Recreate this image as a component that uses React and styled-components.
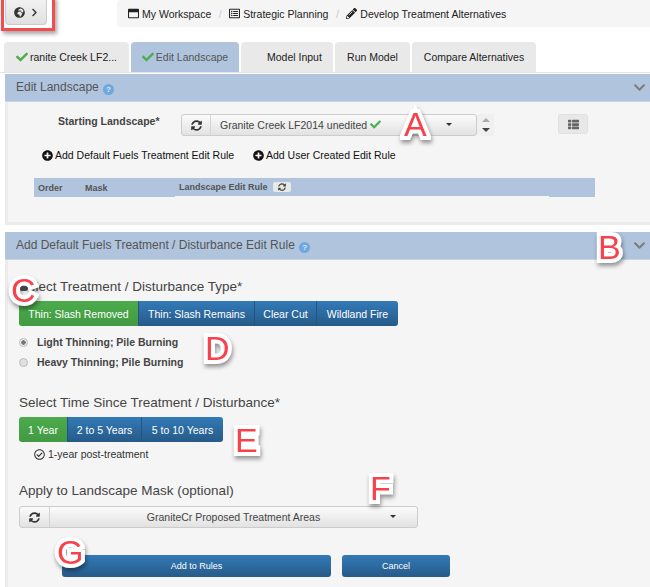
import React from "react";
import styled, { createGlobalStyle } from "styled-components";
import {
  FaGlobeAfrica,
  FaChevronRight,
  FaChevronDown,
  FaRegWindowMaximize,
  FaRegListAlt,
  FaPencilAlt,
  FaCheck,
  FaSyncAlt,
  FaPlusCircle,
  FaThList,
  FaRegCheckCircle,
} from "react-icons/fa";

const GlobalStyle = createGlobalStyle`
  html, body { margin: 0; padding: 0; background: #fff; }
  * { box-sizing: border-box; }
`;

const App = () => {
  return (
    <Page>
      <GlobalStyle />
      <TopBar>
        <MenuButton>
          <FaGlobeAfrica size={11} />
          <FaChevronRight size={9} />
        </MenuButton>
        <Breadcrumb>
          <Crumb><FaRegWindowMaximize size={11} />My Workspace</Crumb>
          <Slash>/</Slash>
          <Crumb><FaRegListAlt size={11} />Strategic Planning</Crumb>
          <Slash>/</Slash>
          <Crumb><FaPencilAlt size={11} />Develop Treatment Alternatives</Crumb>
        </Breadcrumb>
      </TopBar>

      <Tabs>
        <Tab $width={125}><GreenCheck size={12} />ranite Creek LF2...</Tab>
        <Tab $width={108} $active><GreenCheck size={12} />Edit Landscape</Tab>
        <Tab $width={92} $pad={26}>Model Input</Tab>
        <Tab $width={75}>Run Model</Tab>
        <Tab $width={124}>Compare Alternatives</Tab>
      </Tabs>

      <PanelHeader>
        <HeaderTitle>Edit Landscape <Help>?</Help></HeaderTitle>
        <Collapse size={13} />
      </PanelHeader>
      <LandscapeBody>
        <StartRow>
          <StartLabel>Starting Landscape*</StartLabel>
          <SelectGroup $width={296}>
            <RefreshAddon $width={29}><FaSyncAlt size={11} /></RefreshAddon>
            <SelectMain $align="left">
              <span>Granite Creek LF2014 unedited <GreenCheck size={11} /></span>
              <Caret $right={24} />
            </SelectMain>
          </SelectGroup>
          <Spinner>
            <Arrow $up />
            <Arrow />
          </Spinner>
          <ListButton><FaThList size={11} /></ListButton>
        </StartRow>
        <AddRow>
          <AddLink $width={211}><FaPlusCircle size={11} />Add Default Fuels Treatment Edit Rule</AddLink>
          <AddLink><FaPlusCircle size={11} />Add User Created Edit Rule</AddLink>
        </AddRow>
        <RuleTable>
          <RuleCell $width={141}>
            <RuleHead $width={47}>Order</RuleHead>
            <RuleHead>Mask</RuleHead>
          </RuleCell>
          <RuleCell $width={374} $short>
            <RuleHead $width={94}>Landscape Edit Rule</RuleHead>
            <MiniRefresh><FaSyncAlt size={8} /></MiniRefresh>
          </RuleCell>
          <RuleCell $width={46} />
        </RuleTable>
      </LandscapeBody>

      <Gap />

      <PanelHeader>
        <HeaderTitle>Add Default Fuels Treatment / Disturbance Edit Rule <Help>?</Help></HeaderTitle>
        <Collapse size={13} />
      </PanelHeader>
      <RuleBody>
        <SectionTitle>Select Treatment / Disturbance Type*</SectionTitle>
        <Segments>
          <Segment $width={120} $active>Thin: Slash Removed</Segment>
          <Segment $width={116}>Thin: Slash Remains</Segment>
          <Segment $width={62}>Clear Cut</Segment>
          <Segment $width={81}>Wildland Fire</Segment>
        </Segments>
        <RadioGroup>
          <RadioRow>
            <Radio $checked />
            <RadioLabel>Light Thinning; Pile Burning</RadioLabel>
          </RadioRow>
          <RadioRow>
            <Radio />
            <RadioLabel>Heavy Thinning; Pile Burning</RadioLabel>
          </RadioRow>
        </RadioGroup>

        <SectionTitle $top={23}>Select Time Since Treatment / Disturbance*</SectionTitle>
        <Segments>
          <Segment $width={49} $active>1 Year</Segment>
          <Segment $width={74}>2 to 5 Years</Segment>
          <Segment $width={81}>5 to 10 Years</Segment>
        </Segments>
        <Note><FaRegCheckCircle size={11} />1-year post-treatment</Note>

        <SectionTitle $top={17} $bottom={7}>Apply to Landscape Mask (optional)</SectionTitle>
        <SelectGroup $width={399}>
          <RefreshAddon $width={30}><FaSyncAlt size={11} /></RefreshAddon>
          <SelectMain>
            GraniteCr Proposed Treatment Areas
            <Caret $right={21} />
          </SelectMain>
        </SelectGroup>
        <Actions>
          <ActionButton $width={269}>Add to Rules</ActionButton>
          <ActionButton $width={108}>Cancel</ActionButton>
        </Actions>
      </RuleBody>

      <Highlight />
      <Marker $x={404} $y={102}>A</Marker>
      <Marker $x={598} $y={225}>B</Marker>
      <Marker $x={11} $y={268}>C</Marker>
      <HiddenIcon />
      <Marker $x={205} $y={326}>D</Marker>
      <Marker $x={235} $y={418}>E</Marker>
      <Marker $x={370} $y={466}>F</Marker>
      <Marker $x={57} $y={530}>G</Marker>
    </Page>
  );
};

export default App;

const Page = styled.div`
  position: relative;
  width: 650px;
  height: 587px;
  overflow: hidden;
  background: #fff;
  color: #222;
  font-family: "Liberation Sans", Arial, sans-serif;
  font-size: 10.5px;
`;

const TopBar = styled.div`
  display: flex;
  height: 42px;
  padding-left: 5px;
`;

const MenuButton = styled.div`
  display: flex;
  align-items: center;
  justify-content: center;
  gap: 5px;
  width: 42px;
  height: 25px;
  background: linear-gradient(#f2f2f2, #e0e0e0);
  border: 1px solid #ccc;
  border-top: 0;
  border-radius: 0 0 4px 4px;
  color: #333;
`;

const Breadcrumb = styled.div`
  display: flex;
  align-items: center;
  gap: 6px;
  margin-left: 70px;
  flex: 1;
  height: 27px;
  padding-left: 11px;
  background: #f5f5f5;
  border-radius: 4px 0 0 4px;
`;

const Crumb = styled.span`
  display: flex;
  align-items: center;
  gap: 3px;
  font-size: 10.5px;
  color: #222;
  white-space: nowrap;
`;

const Slash = styled.span`
  margin: 0 1.5px;
  color: #ccc;
`;

const Tabs = styled.div`
  display: flex;
  gap: 2px;
  height: 31px;
  padding-left: 4px;
  border-bottom: 1px solid #e4e4e4;
`;

const Tab = styled.div`
  display: flex;
  align-items: center;
  justify-content: ${(p) => (p.$pad ? "flex-start" : "center")};
  gap: 2px;
  width: ${(p) => p.$width}px;
  height: 30px;
  padding-left: ${(p) => p.$pad || 0}px;
  background: ${(p) => (p.$active ? "#b0c4de" : "#e9e9e9")};
  border-radius: 4px 4px 0 0;
  color: ${(p) => (p.$active ? "#555" : "#222")};
  font-size: 10.5px;
  white-space: nowrap;
`;

const GreenCheck = styled(FaCheck)`
  color: #4cae4c;
  vertical-align: -1px;
`;

const PanelHeader = styled.div`
  display: flex;
  align-items: center;
  justify-content: space-between;
  height: 28px;
  margin: 1px 0 0 5px;
  padding: 0 4px 0 11px;
  background: #b0c4de;
  border-bottom: 1px solid #c8d4e4;
`;

const HeaderTitle = styled.div`
  font-size: 12px;
  color: #555;
`;

const Help = styled.span`
  display: inline-block;
  width: 11px;
  height: 11px;
  margin-left: 1px;
  border-radius: 50%;
  background: #6fa8e0;
  color: #dfeaf6;
  font-size: 8px;
  font-weight: bold;
  line-height: 11px;
  text-align: center;
  vertical-align: -1px;
`;

const Collapse = styled(FaChevronDown)`
  color: #7d7d7d;
`;

const LandscapeBody = styled.div`
  height: 123px;
  margin-left: 5px;
  padding-top: 12px;
  background: #f5f5f5;
  border-left: 3px solid #ececec;
  border-bottom: 3px solid #ececec;
`;

const StartRow = styled.div`
  display: flex;
  align-items: flex-start;
  padding-left: 50px;
`;

const StartLabel = styled.div`
  width: 123px;
  padding-top: 1px;
  font-size: 10.5px;
  font-weight: bold;
  color: #444;
`;

const SelectGroup = styled.div`
  display: flex;
  width: ${(p) => p.$width}px;
  height: 22px;
  border: 1px solid #ccc;
  border-radius: 3px;
  background: linear-gradient(#fbfbfb, #e2e2e2);
`;

const RefreshAddon = styled.div`
  display: flex;
  align-items: center;
  justify-content: center;
  width: ${(p) => p.$width}px;
  border-right: 1px solid #d4d4d4;
  color: #333;
`;

const SelectMain = styled.div`
  position: relative;
  display: flex;
  align-items: center;
  justify-content: ${(p) => (p.$align === "left" ? "flex-start" : "center")};
  flex: 1;
  padding-left: ${(p) => (p.$align === "left" ? "9px" : "0")};
  font-size: 10.5px;
  color: #444;
`;

const Caret = styled.i`
  position: absolute;
  top: 8px;
  right: ${(p) => p.$right}px;
  width: 0;
  height: 0;
  border-left: 3px solid transparent;
  border-right: 3px solid transparent;
  border-top: 3px solid #333;
`;

const Spinner = styled.div`
  display: flex;
  flex-direction: column;
  align-items: center;
  justify-content: center;
  gap: 6px;
  width: 17px;
  height: 22px;
  background: #f0f0f0;
`;

const Arrow = styled.i`
  width: 0;
  height: 0;
  border-left: 4px solid transparent;
  border-right: 4px solid transparent;
  ${(p) =>
    p.$up ? "border-bottom: 4px solid #aaa;" : "border-top: 4px solid #444;"}
`;

const ListButton = styled.div`
  display: flex;
  align-items: center;
  justify-content: center;
  width: 30px;
  height: 20px;
  margin-left: 64px;
  background: #e8e8e8;
  border: 1px solid #e0e0e0;
  border-radius: 3px;
  color: #666;
`;

const AddRow = styled.div`
  display: flex;
  align-items: center;
  height: 14px;
  margin-top: 12px;
  padding-left: 34px;
`;

const AddLink = styled.div`
  display: flex;
  align-items: center;
  gap: 2px;
  ${(p) => p.$width && `width: ${p.$width}px;`}
  font-size: 10.5px;
  color: #111;
  white-space: nowrap;
`;

const RuleTable = styled.div`
  display: flex;
  align-items: flex-start;
  margin: 16px 0 0 26px;
`;

const RuleCell = styled.div`
  display: flex;
  align-items: center;
  width: ${(p) => p.$width}px;
  height: ${(p) => (p.$short ? 18 : 19)}px;
  padding-left: 4px;
  background: #b0c4de;
`;

const RuleHead = styled.div`
  ${(p) => p.$width && `width: ${p.$width}px;`}
  font-size: 9px;
  font-weight: bold;
  color: #555;
  white-space: nowrap;
`;

const MiniRefresh = styled.div`
  display: flex;
  align-items: center;
  justify-content: center;
  width: 18px;
  height: 10px;
  background: #e8e8e8;
  border-radius: 2px;
  color: #444;
`;

const Gap = styled.div`
  height: 6px;
`;

const RuleBody = styled.div`
  height: 330px;
  margin-left: 5px;
  padding: 19px 0 0 11px;
  background: #f5f5f5;
  border-left: 3px solid #ececec;
`;

const SectionTitle = styled.div`
  height: 16px;
  margin: ${(p) => p.$top || 0}px 0 ${(p) => p.$bottom || 6}px;
  font-size: 13.5px;
  line-height: 16px;
  color: #444;
  white-space: nowrap;
`;

const Segments = styled.div`
  display: flex;
`;

const Segment = styled.div`
  display: flex;
  align-items: center;
  justify-content: center;
  width: ${(p) => p.$width}px;
  height: 25px;
  background: ${(p) =>
    p.$active
      ? "linear-gradient(#4cab4c, #429a42)"
      : "linear-gradient(#337ab7, #265a88)"};
  border-right: 1px solid #245580;
  color: #fff;
  font-size: 10.5px;
  white-space: nowrap;

  &:first-child {
    border-radius: 3px 0 0 3px;
  }

  &:last-child {
    border-radius: 0 3px 3px 0;
    border-right: 0;
  }
`;

const RadioGroup = styled.div`
  margin-top: 6px;
`;

const RadioRow = styled.div`
  display: flex;
  align-items: center;
  height: 20px;
`;

const Radio = styled.span`
  width: 9px;
  height: 9px;
  margin-right: 9px;
  border: 1px solid #bbb;
  border-radius: 50%;
  background: ${(p) =>
    p.$checked
      ? "radial-gradient(circle, #777 0 2px, #eee 2.5px)"
      : "#e0e0e0"};
`;

const RadioLabel = styled.span`
  font-size: 10.5px;
  font-weight: bold;
  color: #444;
`;

const Note = styled.div`
  display: flex;
  align-items: center;
  gap: 3px;
  height: 24px;
  padding-left: 15px;
  font-size: 10.5px;
  color: #333;
`;

const Actions = styled.div`
  display: flex;
  gap: 11px;
  margin: 27px 0 0 43px;
`;

const ActionButton = styled.div`
  display: flex;
  align-items: center;
  justify-content: center;
  width: ${(p) => p.$width}px;
  height: 22px;
  background: linear-gradient(#337ab7, #265a88);
  border-radius: 3px;
  color: #fff;
  font-size: 9px;
`;

const Highlight = styled.div`
  position: absolute;
  top: -4px;
  left: 1px;
  width: 54px;
  height: 35px;
  border: 3px solid #f44b4f;
  box-shadow: 2px 3px 4px rgba(0, 0, 0, 0.35);
`;

const HiddenIcon = styled.i`
  position: absolute;
  top: 286px;
  left: 20px;
  width: 8px;
  height: 5px;
  border-radius: 50%;
  background: #444;
`;

const Marker = styled.span`
  position: absolute;
  top: ${(p) => p.$y}px;
  left: ${(p) => p.$x}px;
  font-size: 34px;
  line-height: 44px;
  font-weight: normal;
  color: #f8414a;
  -webkit-text-stroke: 8px #fff;
  paint-order: stroke fill;
  filter: drop-shadow(1px 3px 2px rgba(0, 0, 0, 0.4));
`;
